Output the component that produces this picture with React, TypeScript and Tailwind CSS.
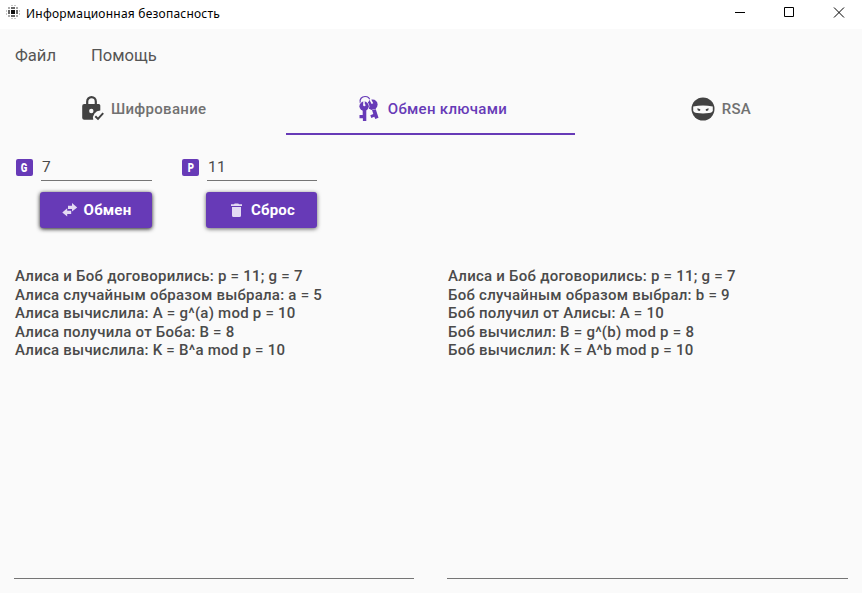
import type { ReactNode } from "react";

function AppIcon() {
  const cells = [0, 1, 2, 3];
  return (
    <svg width="14" height="14" viewBox="0 0 14 14" className="shrink-0">
      {cells.map((r) =>
        cells.map((c) => {
          const d = Math.hypot(r - 1.5, c - 1.5);
          return (
            <rect
              key={`${r}${c}`}
              x={2 + c * 3 - (c > 1 ? 1 : 0)}
              y={2 + r * 3 - (r > 1 ? 1 : 0)}
              width="2"
              height="2"
              fill={d > 2 ? "#aaa" : d > 1 ? "#666" : "#111"}
            />
          );
        }),
      )}
      <path d="M5 .5h2M8 .5h2M5 13.500h2M8 13.500h2M.5 5v2M.5 8v2M13.500 5v2M13.500 8v2" stroke="#c4c4c4" />
    </svg>
  );
}

function LockIcon() {
  return (
    <svg width="26" height="26" viewBox="0 0 26 26" className="-mt-[2px] shrink-0">
      <path d="M7.200 10V6.400a4.300 4.300 0 0 1 8.600 0V10" fill="none" stroke="#424242" strokeWidth="2.200" />
      <path d="M4.200 9h14.600a1.500 1.500 0 0 1 1.500 1.500v5.100a7.200 7.200 0 0 0-7 9.200H4.200a2 2 0 0 1-2-2V11a2 2 0 0 1 2-2z" fill="#424242" />
      <circle cx="11.300" cy="16" r="2.200" fill="#fafafa" />
      <path d="m15.300 21.200 2.700 2.700 5.200-5.700" fill="none" stroke="#424242" strokeWidth="2" />
    </svg>
  );
}

function KeysIcon() {
  return (
    <svg width="22" height="27" viewBox="0 0 22 27" className="-mt-[2px] shrink-0">
      <path d="M2.300 8C1 4 4 1.500 7 1.500c3 0 4.800 1.800 4.900 4.500" fill="none" stroke="#673ab7" strokeWidth="1.200" />
      <path d="M11.300 6.200 14.500 15l3.300-.7 2.700 8.500-3.200 1.200-1-2.200-3 1.200-1-2.800 3-1.200-1.300-3.900-3-1.300L9 9z" fill="#673ab7" />
      <circle cx="14.600" cy="9.600" r="5" fill="#673ab7" />
      <path d="m11.900 3.800 2.500 4.800" stroke="#fafafa" strokeWidth="1.800" />
      <circle cx="6.100" cy="11.300" r="5.300" fill="#fafafa" />
      <circle cx="6.100" cy="11.300" r="4.700" fill="#673ab7" />
      <path d="M4.700 14h3.600v12H4.900v-2.700H1.500v-3.400h3.200z" fill="#673ab7" />
      <path d="M6 6.200v4.200" stroke="#fafafa" strokeWidth="1.600" />
      <circle cx="6.400" cy="10.200" r="1.100" fill="#fafafa" />
    </svg>
  );
}

function NinjaIcon() {
  return (
    <svg width="24" height="24" viewBox="0 0 24 24" className="-mt-px shrink-0">
      <circle cx="12" cy="12" r="11.500" fill="#424242" />
      <path d="M2.200 9.500Q12 7.500 21.800 9.500v4Q21.500 15.500 18 16q-6 .8-12 0Q2.500 15.500 2.200 13.500z" fill="#fafafa" />
      <path d="m5.900 11.100 3.400 1.200a1.400 1.400 0 1 1-2.600-.5zM18.100 11.100l-3.400 1.200a1.400 1.400 0 1 0 2.600-.5z" fill="#424242" />
    </svg>
  );
}

function Tab({ icon, label, active }: { icon: ReactNode; label: ReactNode; active?: boolean }) {
  return (
    <div
      className={
        active
          ? "-ml-px flex h-[53px] items-center justify-center border-b-2 border-[#673ab7] pt-[3px] pl-[4px] text-[#673ab7]"
          : "flex h-[53px] items-center justify-center border-b-2 border-transparent pt-[3px] text-[#717171]"
      }
    >
      {icon}
      {label}
    </div>
  );
}

function Field({ letter, value }: { letter: string; value: string }) {
  return (
    <div className="flex h-[27px] items-start">
      <span className="mt-[5px] flex h-[17px] w-[17px] items-center justify-center rounded-[2px] bg-[#673ab7] text-[12px] leading-none font-black text-white">
        <span className="scale-x-[0.8]">{letter}</span>
      </span>
      <div className="ml-2 h-[27px] grow border-b border-[#757575] pl-px text-[15.500px] leading-[26px] tracking-[0.200px]">{value}</div>
    </div>
  );
}

const alice = [
  "Алиса и Боб договорились: p = 11; g = 7",
  "Алиса случайным образом выбрала: a = 5",
  "Алиса вычислила: A = g^(a) mod p = 10",
  "Алиса получила от Боба: B = 8",
  "Алиса вычислила: K = B^a mod p = 10",
];
const bob = [
  "Алиса и Боб договорились: p = 11; g = 7",
  "Боб случайным образом выбрал: b = 9",
  "Боб получил от Алисы: A = 10",
  "Боб вычислил: B = g^(b) mod p = 8",
  "Боб вычислил: K = A^b mod p = 10",
];

function Log({ lines }: { lines: string[] }) {
  return (
    <div className="h-[312px] border-b border-[#757575] pl-px text-[15px] leading-[18.600px] font-medium tracking-[0.240px] whitespace-nowrap">
      {lines.map((line) => (
        <p key={line}>{line}</p>
      ))}
    </div>
  );
}

export default function App() {
  return (
    <div className="flex h-[593px] w-[862px] flex-col overflow-hidden bg-[#fafafa] font-['Roboto','Liberation_Sans',sans-serif] text-[#4a4a4a]">
      <header className="flex h-[29px] shrink-0 items-start bg-white text-black">
        <div className="mt-[5px] ml-[6px]">
          <AppIcon />
        </div>
        <span className="mt-px ml-[6px] font-['Noto_Sans','Open_Sans',sans-serif] text-[12px] leading-[25px] tracking-[0.220px]">
          Информационная безопасность
        </span>
        <svg width="127" height="25" viewBox="0 0 127 25" className="ml-auto" fill="none" stroke="#000">
          <path d="M0 12.500h10M49.500 7.500h9v9h-9zM99 7.500l10 10M109 7.500l-10 10" />
        </svg>
      </header>
      <nav className="flex h-[53px] shrink-0 items-center gap-[35px] pt-[2px] pl-[15px] text-[16.600px] text-[#555]">
        <span>Файл</span>
        <span>Помощь</span>
      </nav>
      <div className="grid shrink-0 grid-cols-3 text-[15px] font-medium">
        <Tab icon={<LockIcon />} label={<span className="mr-px ml-[5px] tracking-[0.300px]">Шифрование</span>} />
        <Tab active icon={<KeysIcon />} label={<span className="ml-[8px] tracking-[0.300px]">Обмен ключами</span>} />
        <Tab icon={<NinjaIcon />} label={<span className="mr-[-5px] ml-[7px] tracking-[0.200px]">RSA</span>} />
      </div>
      <section className="mt-[19px] flex shrink-0 gap-[30px] pl-4">
        <div className="w-[136px]">
          <Field letter="G" value="7" />
          <button className="mt-[11px] ml-6 flex h-9 w-[112px] items-center justify-center rounded-[3px] bg-[#673ab7] pl-px text-[15px] font-bold tracking-[0.200px] text-white shadow-[0_1px_4px_rgba(0,0,0,0.9)]">
            <svg width="16" height="14" viewBox="0 0 16 14" className="mr-[6px]" fill="#e4daf3">
              <path d="M10 0v2.700H6v3.400h4v2.500L15.200 4.400zM5.200 5.200.3 9.400l4.900 4.200v-2.500h4V7.700h-4z" />
            </svg>
            Обмен
          </button>
        </div>
        <div className="w-[135px]">
          <Field letter="P" value="11" />
          <button className="mt-[11px] ml-6 flex h-9 w-[111px] items-center justify-center rounded-[3px] bg-[#673ab7] pl-[3px] text-[15px] font-bold tracking-[0.200px] text-white shadow-[0_1px_4px_rgba(0,0,0,0.6)]">
            <svg width="12" height="14" viewBox="0 0 12 14" className="mr-[8px]" fill="#e4daf3">
              <path d="M1 4h9v8.500a1.500 1.500 0 0 1-1.500 1.500h-6A1.500 1.500 0 0 1 1 12.500zM0 1.300h3L3.700.5h3.600L8 1.300h3V3H0z" />
            </svg>
            Сброс
          </button>
        </div>
      </section>
      <main className="mt-[39px] grid grid-cols-[400px_401px] gap-[33px] pl-[14px]">
        <Log lines={alice} />
        <Log lines={bob} />
      </main>
    </div>
  );
}
